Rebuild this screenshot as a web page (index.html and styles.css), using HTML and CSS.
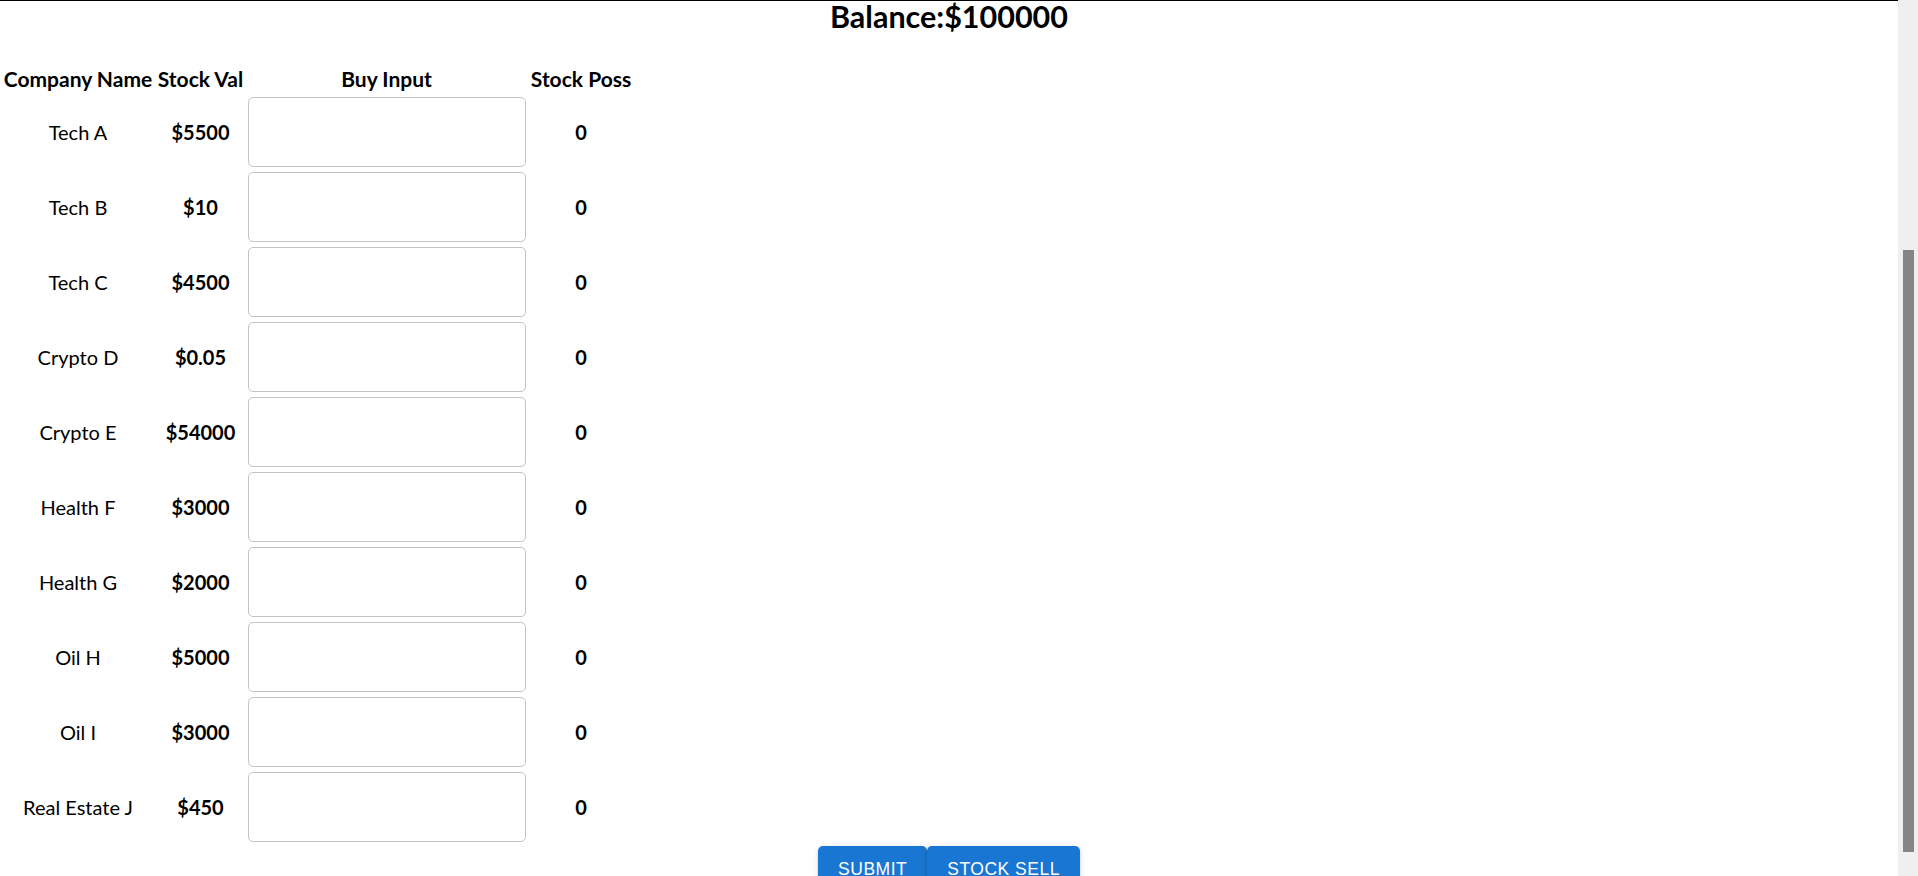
FILE: index.html
```html
<!DOCTYPE html>
<html lang="en">
<head>
<meta charset="utf-8">
<title>Stock Trader</title>
<link rel="stylesheet" href="styles.css">
</head>
<body>
<div class="page">
  <h2 class="balance">Balance:$100000</h2>
  <div class="stock-grid">
    <div class="th">Company Name</div>
    <div class="th">Stock Val</div>
    <div class="th">Buy Input</div>
    <div class="th">Stock Poss</div>

    <div class="name">Tech A</div><div class="val">$5500</div><div class="inp"><input class="buy" type="text"></div><div class="poss">0</div>
    <div class="name">Tech B</div><div class="val">$10</div><div class="inp"><input class="buy" type="text"></div><div class="poss">0</div>
    <div class="name">Tech C</div><div class="val">$4500</div><div class="inp"><input class="buy" type="text"></div><div class="poss">0</div>
    <div class="name">Crypto D</div><div class="val">$0.05</div><div class="inp"><input class="buy" type="text"></div><div class="poss">0</div>
    <div class="name">Crypto E</div><div class="val">$54000</div><div class="inp"><input class="buy" type="text"></div><div class="poss">0</div>
    <div class="name">Health F</div><div class="val">$3000</div><div class="inp"><input class="buy" type="text"></div><div class="poss">0</div>
    <div class="name">Health G</div><div class="val">$2000</div><div class="inp"><input class="buy" type="text"></div><div class="poss">0</div>
    <div class="name">Oil H</div><div class="val">$5000</div><div class="inp"><input class="buy" type="text"></div><div class="poss">0</div>
    <div class="name">Oil I</div><div class="val">$3000</div><div class="inp"><input class="buy" type="text"></div><div class="poss">0</div>
    <div class="name">Real Estate J</div><div class="val">$450</div><div class="inp"><input class="buy" type="text"></div><div class="poss">0</div>
  </div>
  <div class="actions">
    <button class="btn" type="button">Submit</button>
    <button class="btn" type="button">Stock Sell</button>
  </div>
</div>
<div class="scrollbar"><div class="thumb"></div></div>
</body>
</html>
```
FILE: styles.css
```css
html, body {
  margin: 0;
  padding: 0;
  height: 876px;
  overflow: hidden;
  background: #fff;
}
body {
  display: flex;
  font-family: Lato, "Open Sans", sans-serif;
  color: #000;
}
.page {
  flex: 1;
  border-top: 1px solid #000;
  display: flex;
  flex-direction: column;
  min-width: 0;
}
.balance {
  margin: 0;
  font-size: 30.5px;
  line-height: 30px;
  font-weight: 700;
  text-align: center;
}
.stock-grid {
  margin-top: 35px;
  margin-left: 2.5px;
  display: grid;
  grid-template-columns: 151px 89px 278px 106px;
  grid-auto-rows: 70px;
  grid-template-rows: 26px;
  column-gap: 2.5px;
  row-gap: 5px;
  font-size: 20px;
  width: max-content;
}
.th {
  font-weight: 700;
  font-size: 21px;
  text-align: center;
  line-height: 26px;
  white-space: nowrap;
}
.name, .val, .poss {
  display: flex;
  align-items: center;
  justify-content: center;
  white-space: nowrap;
}
.val, .poss {
  font-weight: 700;
}
.inp {
  display: flex;
}
.buy {
  width: 278px;
  height: 70px;
  box-sizing: border-box;
  margin: 0;
  border: 1px solid #c4c4c4;
  border-radius: 5px;
  background: #fff;
  outline: none;
  padding: 0 17px;
  font: inherit;
}
.actions {
  margin-top: 4px;
  display: flex;
  justify-content: center;
}
.btn {
  font-family: "Liberation Sans", Arial, sans-serif;
  font-size: 17.5px;
  font-weight: 500;
  letter-spacing: 0.5px;
  text-transform: uppercase;
  line-height: 30.6px;
  padding: 7.5px 20px;
  margin: 0;
  border: 0;
  border-radius: 5px;
  background: #1976d2;
  color: #fff;
  box-shadow: 0 3.75px 1.25px -2.5px rgba(0,0,0,0.2), 0 2.5px 2.5px 0 rgba(0,0,0,0.14), 0 1.25px 6.25px 0 rgba(0,0,0,0.12);
}
.scrollbar {
  width: 20px;
  flex: 0 0 20px;
  background: #efefef;
  display: flex;
  flex-direction: column;
  align-items: center;
}
.thumb {
  margin-top: 250px;
  width: 11px;
  height: 602px;
  background: #858585;
}
```
